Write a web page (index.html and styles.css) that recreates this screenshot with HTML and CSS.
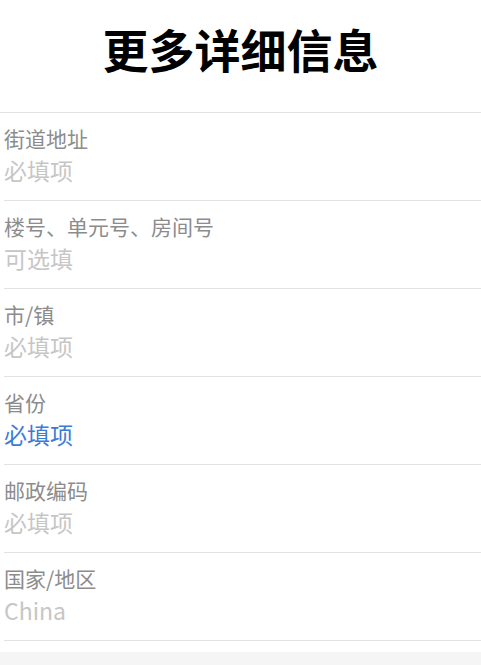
FILE: index.html
```html
<!DOCTYPE html>
<html lang="zh-CN">
<head>
    <meta charset="UTF-8">
    <meta name="viewport" content="width=device-width, initial-scale=1.0">
    <title>更多详细信息</title>
    <link rel="stylesheet" href="styles.css">
</head>
<body>
    <div class="page">
        <h1 class="title">更多详细信息</h1>
        <div class="fields">
            <div class="field">
                <div class="label">街道地址</div>
                <div class="value">必填项</div>
            </div>
            <div class="field">
                <div class="label">楼号、单元号、房间号</div>
                <div class="value">可选填</div>
            </div>
            <div class="field">
                <div class="label">市/镇</div>
                <div class="value">必填项</div>
            </div>
            <div class="field">
                <div class="label">省份</div>
                <div class="value active">必填项</div>
            </div>
            <div class="field">
                <div class="label">邮政编码</div>
                <div class="value">必填项</div>
            </div>
            <div class="field">
                <div class="label">国家/地区</div>
                <div class="value">China</div>
            </div>
        </div>
        <div class="footer"></div>
    </div>
</body>
</html>
```

FILE: styles.css
```css
body {
    margin: 0;
    background-color: #fff;
    font-family: "Noto Sans CJK SC", "Noto Sans", sans-serif;
}

.page {
    width: 481px;
    height: 665px;
    display: flex;
    flex-direction: column;
    overflow: hidden;
}

.title {
    height: 113px;
    margin: 0;
    padding-bottom: 16px;
    display: flex;
    align-items: center;
    justify-content: center;
    border-bottom: 1px solid #e2e2e2;
    box-sizing: border-box;
    font-size: 46px;
    font-weight: 700;
    color: #000;
}

.fields {
    margin-left: 4px;
}

.field {
    height: 88px;
    box-sizing: border-box;
    border-bottom: 1px solid #e2e2e2;
    padding-top: 10px;
}

.label {
    font-size: 21px;
    line-height: 31px;
    color: #8c8c8c;
}

.value {
    font-size: 23px;
    line-height: 33px;
    color: #c6c6c6;
}

.value.active {
    color: #3b7bd8;
}

.footer {
    margin-top: 11px;
    flex: 1;
    background-color: #f5f5f5;
}
```
